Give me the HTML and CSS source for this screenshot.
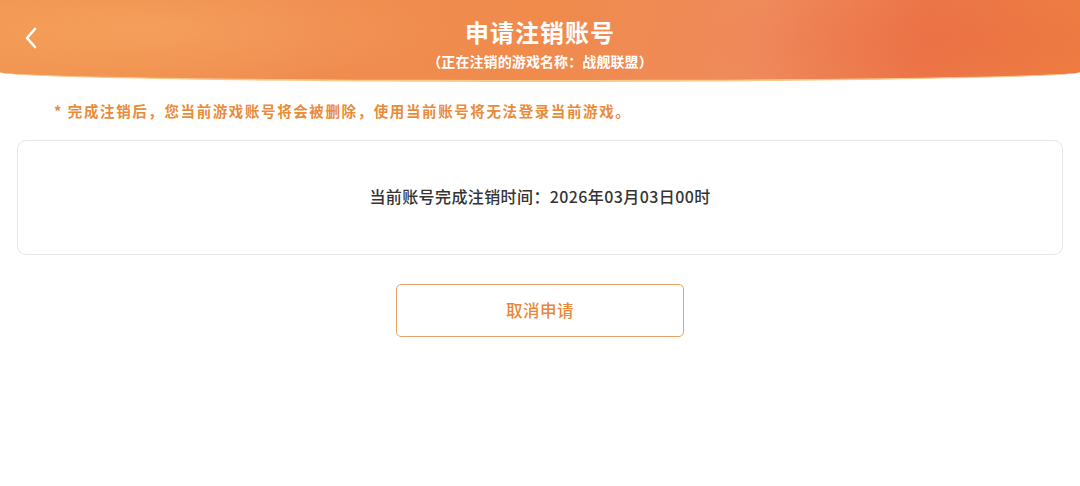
FILE: index.html
```html
<!DOCTYPE html>
<html lang="zh">
<head>
<meta charset="utf-8">
<link rel="stylesheet" href="styles.css">
</head>
<body>
<header class="header">
  <div class="back">
    <svg width="14" height="22" viewBox="0 0 14 22"><path d="M11 2 L3 11 L11 20" fill="none" stroke="#fff" stroke-width="2.6" stroke-linecap="round" stroke-linejoin="round"/></svg>
  </div>
  <h1 class="title">申请注销账号</h1>
  <div class="subtitle">（正在注销的游戏名称：战舰联盟）</div>
</header>
<main class="main">
  <p class="notice">* 完成注销后，您当前游戏账号将会被删除，使用当前账号将无法登录当前游戏。</p>
  <div class="card">当前账号完成注销时间：2026年03月03日00时</div>
  <div class="actions"><button class="cancel">取消申请</button></div>
</main>
</body>
</html>
```

FILE: styles.css
```css
* { box-sizing: border-box; }
html, body { margin: 0; padding: 0; background: #fff; }
body {
  width: 1080px;
  height: 486px;
  overflow: hidden;
  font-family: "Noto Sans CJK SC", "Noto Sans", sans-serif;
}
.header {
  position: relative;
  height: 82px;
  background:
    radial-gradient(ellipse 300px 60px at 150px 30px, rgba(255,190,120,0.3), transparent),
    radial-gradient(ellipse 250px 60px at 950px 40px, rgba(230,90,60,0.2), transparent),
    linear-gradient(100deg, #f19550 0%, #ef8c4f 30%, #f08b4c 50%, #ef8a5c 70%, #ec7748 85%, #ee7e42 100%);
  border-bottom: 2px solid #f8c88a;
  border-radius: 0 0 50% 50% / 0 0 10px 10px;
  text-align: center;
  color: #fff;
  padding-top: 15px;
}
.back {
  position: absolute;
  left: 24px;
  top: 27px;
}
.title {
  margin: 0;
  font-size: 24px;
  font-weight: 700;
  line-height: 34px;
  letter-spacing: 1px;
}
.subtitle {
  font-size: 14px;
  font-weight: 700;
  line-height: 16px;
  margin-top: 4px;
  letter-spacing: 0.1px;
}
.main {
  padding: 0 17px;
}
.notice {
  margin: 19px 0 0 37px;
  font-size: 14.5px;
  font-weight: 700;
  color: #ea8b3a;
  line-height: 20px;
  letter-spacing: 1.6px;
}
.card {
  margin-top: 19px;
  height: 115px;
  border: 1px solid #e6e6e6;
  border-radius: 9px;
  display: flex;
  align-items: center;
  justify-content: center;
  padding-bottom: 3px;
  font-size: 16px;
  font-weight: 500;
  color: #333;
  letter-spacing: 0.4px;
}
.actions {
  display: flex;
  justify-content: center;
  margin-top: 29px;
}
.cancel {
  width: 288px;
  height: 53px;
  background: #fff;
  border: 1.5px solid #e8a468;
  border-radius: 5px;
  color: #e8873a;
  font-family: inherit;
  font-size: 16.5px;
  font-weight: 500;
  letter-spacing: 0.5px;
  padding-bottom: 2px;
}
```
